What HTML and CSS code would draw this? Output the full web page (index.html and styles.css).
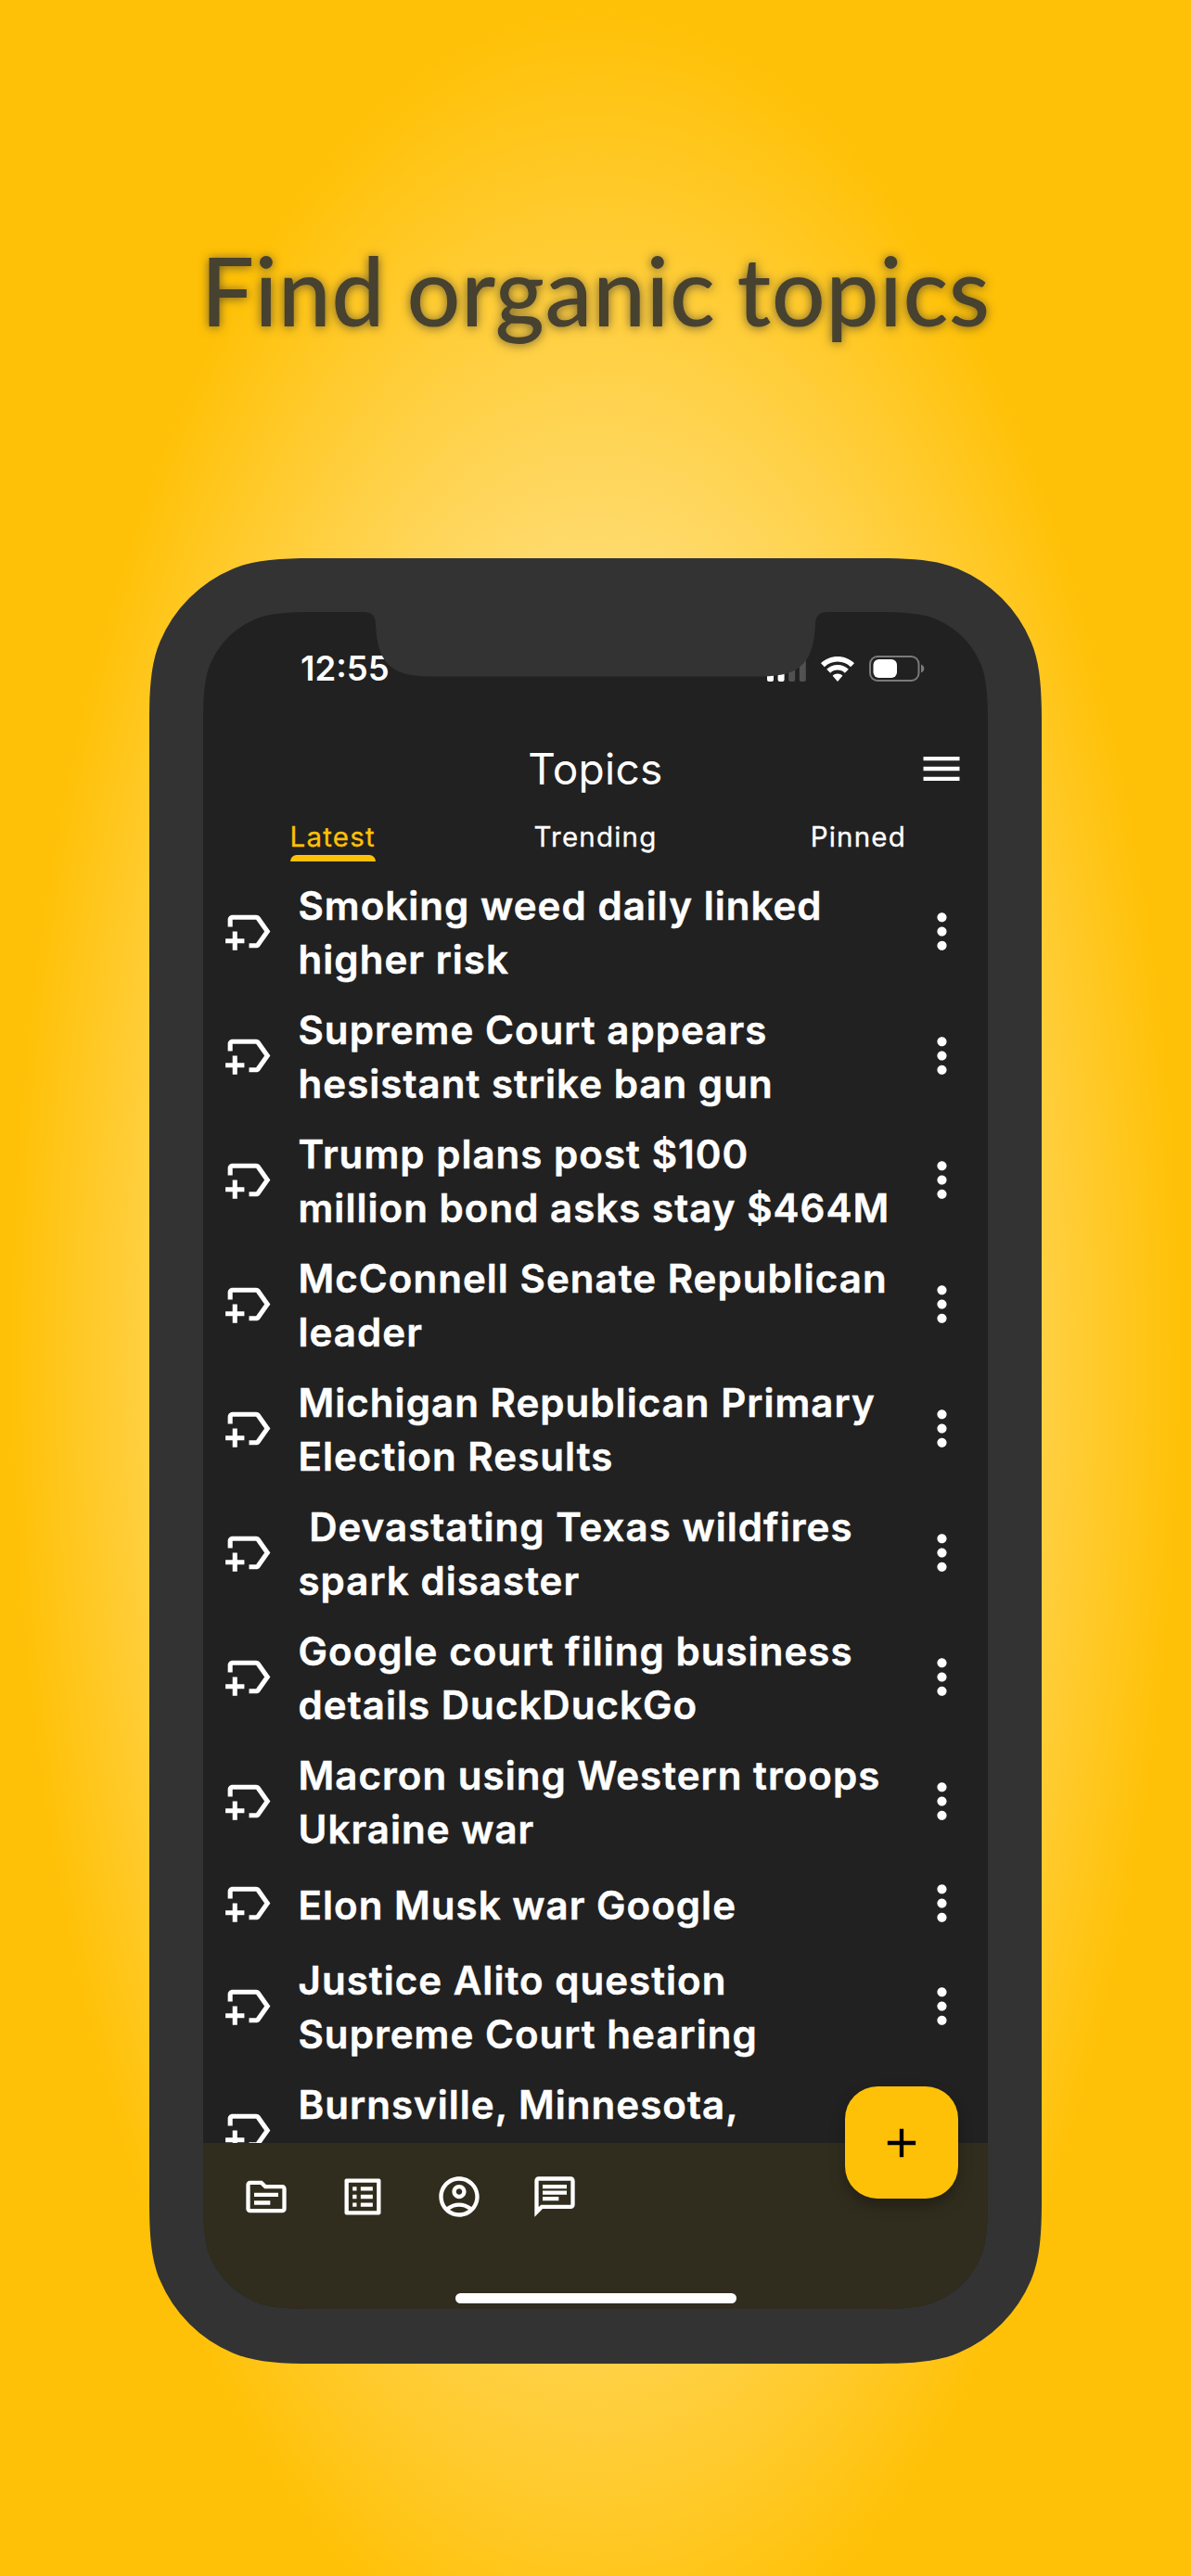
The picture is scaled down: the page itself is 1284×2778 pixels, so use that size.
FILE: index.html
```html
<!DOCTYPE html>
<html lang="en">
  <head>
    <meta charset="utf-8" />
    <meta name="viewport" content="width=device-width, initial-scale=1.0" />
    <title>Topics</title>
    <link rel="stylesheet" href="styles.css">
  </head>
  <body>
    <svg class="sprite" aria-hidden="true">
      <symbol id="icon-label" viewBox="0 0 24 24">
        <path d="M21 12l-4.37 6.16c-.37.52-.98.84-1.63.84h-3v-2h3l3.55-5L15 7H5v3H3V7c0-1.1.9-2 2-2h10c.65 0 1.26.31 1.63.84L21 12zm-11 3H7v-3H5v3H2v2h3v3h2v-3h3v-2z" />
      </symbol>
      <symbol id="icon-more" viewBox="0 0 24 24">
        <path d="M12 8c1.1 0 2-.9 2-2s-.9-2-2-2-2 .9-2 2 .9 2 2 2zm0 2c-1.1 0-2 .9-2 2s.9 2 2 2 2-.9 2-2-.9-2-2-2zm0 6c-1.1 0-2 .9-2 2s.9 2 2 2 2-.9 2-2-.9-2-2-2z" />
      </symbol>
    </svg>

    <h1 class="headline">Find organic topics</h1>

    <div class="phone">
      <div class="screen">
        <div class="status">
          <span class="status__time">12:55</span>
          <div class="status__icons">
            <svg class="status__signal" viewBox="0 0 42 27">
              <rect x="0" y="17" width="7" height="10" rx="2" />
              <rect x="11.6" y="12" width="7" height="15" rx="2" />
              <rect x="23.2" y="6" width="7" height="21" rx="2" opacity="0.22" />
              <rect x="34.8" y="0" width="7" height="27" rx="2" opacity="0.22" />
            </svg>
            <svg class="status__wifi" viewBox="0 0 36 27">
              <path d="M18 0C11 0 4.700 2.700 0 7.200L3.900 11.200C7.600 7.700 12.500 5.500 18 5.500S28.400 7.700 32.100 11.200L36 7.200C31.300 2.700 25 0 18 0Z" />
              <path d="M18 9C13.400 9 9.300 10.800 6.200 13.700L10.200 17.700C12.200 15.700 15 14.500 18 14.500S23.800 15.700 25.800 17.700L29.800 13.700C26.700 10.800 22.600 9 18 9Z" />
              <path d="M18 18.500C15.900 18.500 14 19.300 12.600 20.700L18 27L23.400 20.700C22 19.300 20.100 18.500 18 18.500Z" />
            </svg>
            <svg class="status__battery" viewBox="0 0 60 28">
              <rect x="1" y="1" width="52.500" height="26" rx="8" fill="none" stroke="#7a7a7a" stroke-width="2" />
              <rect x="4.500" y="4" width="25.500" height="20" rx="6" />
              <path d="M56 9.500c2 .6 3.300 2.300 3.300 4.500s-1.300 3.900-3.300 4.500z" fill="#7a7a7a" />
            </svg>
          </div>
        </div>

        <header class="appbar">
          <h2 class="appbar__title">Topics</h2>
          <svg class="icon appbar__menu" viewBox="0 0 24 24"><path d="M3 18h18v-2H3v2zm0-5h18v-2H3v2zm0-7v2h18V6H3z" /></svg>
        </header>

        <nav class="tabs">
          <span class="tabs__item tabs__item--active">Latest</span>
          <span class="tabs__item">Trending</span>
          <span class="tabs__item">Pinned</span>
        </nav>

        <ul class="topics">
          <li class="topic">
            <svg class="topic__icon"><use href="#icon-label" /></svg>
            <p class="topic__text">Smoking weed daily linked<br />higher risk</p>
            <svg class="topic__icon"><use href="#icon-more" /></svg>
          </li>
          <li class="topic">
            <svg class="topic__icon"><use href="#icon-label" /></svg>
            <p class="topic__text">Supreme Court appears<br />hesistant strike ban gun</p>
            <svg class="topic__icon"><use href="#icon-more" /></svg>
          </li>
          <li class="topic">
            <svg class="topic__icon"><use href="#icon-label" /></svg>
            <p class="topic__text">Trump plans post $100<br />million bond asks stay $464M</p>
            <svg class="topic__icon"><use href="#icon-more" /></svg>
          </li>
          <li class="topic">
            <svg class="topic__icon"><use href="#icon-label" /></svg>
            <p class="topic__text">McConnell Senate Republican<br />leader</p>
            <svg class="topic__icon"><use href="#icon-more" /></svg>
          </li>
          <li class="topic">
            <svg class="topic__icon"><use href="#icon-label" /></svg>
            <p class="topic__text">Michigan Republican Primary<br />Election Results</p>
            <svg class="topic__icon"><use href="#icon-more" /></svg>
          </li>
          <li class="topic">
            <svg class="topic__icon"><use href="#icon-label" /></svg>
            <p class="topic__text">&nbsp;Devastating Texas wildfires<br />spark disaster</p>
            <svg class="topic__icon"><use href="#icon-more" /></svg>
          </li>
          <li class="topic">
            <svg class="topic__icon"><use href="#icon-label" /></svg>
            <p class="topic__text">Google court filing business<br />details DuckDuckGo</p>
            <svg class="topic__icon"><use href="#icon-more" /></svg>
          </li>
          <li class="topic">
            <svg class="topic__icon"><use href="#icon-label" /></svg>
            <p class="topic__text">Macron using Western troops<br />Ukraine war</p>
            <svg class="topic__icon"><use href="#icon-more" /></svg>
          </li>
          <li class="topic">
            <svg class="topic__icon"><use href="#icon-label" /></svg>
            <p class="topic__text">Elon Musk war Google</p>
            <svg class="topic__icon"><use href="#icon-more" /></svg>
          </li>
          <li class="topic">
            <svg class="topic__icon"><use href="#icon-label" /></svg>
            <p class="topic__text">Justice Alito question<br />Supreme Court hearing</p>
            <svg class="topic__icon"><use href="#icon-more" /></svg>
          </li>
          <li class="topic">
            <svg class="topic__icon"><use href="#icon-label" /></svg>
            <p class="topic__text">Burnsville, Minnesota,<br />&nbsp;</p>
          </li>
        </ul>

        <footer class="bottombar">
          <svg class="icon" viewBox="0 0 24 24"><path d="M20 6h-8l-2-2H4c-1.100 0-1.990.9-1.990 2L2 18c0 1.100.9 2 2 2h16c1.100 0 2-.9 2-2V8c0-1.100-.9-2-2-2zm0 12H4V6h5.170l2 2H20v10zm-2-6H6v-2h12v2zm-4 4H6v-2h8v2z" /></svg>
          <svg class="icon" viewBox="0 0 24 24"><path d="M19 5v14H5V5h14m1.100-2H3.900c-.5 0-.9.4-.9.9v16.200c0 .4.4.9.9.9h16.200c.4 0 .9-.5.9-.9V3.900c0-.5-.5-.9-.9-.9zM11 7h6v2h-6V7zm0 4h6v2h-6v-2zm0 4h6v2h-6zM7 7h2v2H7zm0 4h2v2H7zm0 4h2v2H7z" /></svg>
          <svg class="icon" viewBox="0 0 24 24"><path d="M12 2C6.480 2 2 6.480 2 12s4.480 10 10 10 10-4.480 10-10S17.520 2 12 2zM7.350 18.500C8.660 17.560 10.260 17 12 17s3.340.56 4.650 1.500c-1.310.94-2.910 1.500-4.650 1.500s-3.340-.56-4.650-1.500zm10.790-1.380C16.450 15.800 14.320 15 12 15s-4.450.8-6.140 2.120C4.700 15.730 4 13.950 4 12c0-4.420 3.580-8 8-8s8 3.580 8 8c0 1.950-.7 3.730-1.860 5.120zM12 6c-1.930 0-3.500 1.570-3.500 3.500S10.070 13 12 13s3.500-1.570 3.500-3.500S13.930 6 12 6zm0 5c-.83 0-1.500-.67-1.500-1.500S11.170 8 12 8s1.500.67 1.500 1.500S12.830 11 12 11z" /></svg>
          <svg class="icon" viewBox="0 0 24 24"><path d="M4 4h16v12H5.170L4 17.170V4m0-2c-1.100 0-1.990.9-1.990 2L2 22l4-4h14c1.100 0 2-.9 2-2V4c0-1.100-.9-2-2-2H4zm2 10h8v2H6v-2zm0-3h12v2H6V9zm0-3h12v2H6V6z" /></svg>
        </footer>

        <div class="notch"></div>
        <button class="fab" type="button" aria-label="Add topic">
          <svg class="icon" viewBox="0 0 24 24"><path d="M19 13h-6v6h-2v-6H5v-2h6V5h2v6h6v2z" /></svg>
        </button>
        <div class="home-indicator"></div>
      </div>
    </div>
  </body>
</html>
```
FILE: styles.css
```css
body {
  --color-primary: #ffc107;
  --color-frame: #333333;
  --color-screen: #212121;
  --color-bar: #312d1e;

  margin: 0;
  height: 2778px;
  overflow: hidden;
  display: flex;
  flex-direction: column;
  align-items: center;
  background: radial-gradient(ellipse 632px 1450px at 642px 1460px, #ffffff 0%, var(--color-primary) 100%);
  font-family: "Inter", sans-serif;
}

.sprite {
  position: absolute;
  width: 0;
  height: 0;
}

.headline {
  margin: 251px 0 0;
  height: 351px;
  font: 500 102px/124px "Lato", sans-serif;
  letter-spacing: 0.5px;
  word-spacing: -3px;
  white-space: nowrap;
  color: #474130;
  text-shadow: 0 1px 11px rgba(71, 65, 48, 0.8);
}

.phone {
  flex: none;
  box-sizing: border-box;
  width: 962px;
  height: 1947px;
  padding: 58px;
  background: var(--color-frame);
  clip-path: path("M0 176C0 140 1.8 113 11.5 90A147 147 0 0 1 90 11.5C113 1.8 140 0 176 0H786C822 0 849 1.8 872 11.5A147 147 0 0 1 950.5 90C960.2 113 962 140 962 176V1771C962 1807 960.2 1834 950.5 1857A147 147 0 0 1 872 1935.5C849 1945.2 822 1947 786 1947H176C140 1947 113 1945.2 90 1935.5A147 147 0 0 1 11.5 1857C1.8 1834 0 1807 0 1771Z");
}

.screen {
  position: relative;
  display: flex;
  flex-direction: column;
  width: 846px;
  height: 1830px;
  background: var(--color-screen);
  color: #ffffff;
  clip-path: path("M0 122C0 92 1.4 70.5 7.7 56A93 93 0 0 1 56 7.7C70.5 1.4 92 0 122 0H724C754 0 775.5 1.4 790 7.7A93 93 0 0 1 838.3 56C844.6 70.5 846 92 846 122V1708C846 1738 844.6 1759.5 838.3 1774A93 93 0 0 1 790 1822.3C775.5 1828.6 754 1830 724 1830H122C92 1830 70.5 1828.6 56 1822.3A93 93 0 0 1 7.7 1774C1.4 1759.5 0 1738 0 1708Z");
}

.icon {
  width: 52px;
  height: 52px;
  fill: currentColor;
}

.status {
  display: flex;
  justify-content: space-between;
  align-items: center;
  height: 122px;
  padding: 0 68px 0 105px;
}

.status__time {
  font-size: 36.500px;
  font-weight: 600;
}

.status__icons {
  display: flex;
  align-items: center;
  gap: 16px;
}

.status__icons svg {
  fill: #ffffff;
}

.status__signal {
  width: 42px;
  height: 27px;
}

.status__wifi {
  width: 36px;
  height: 27px;
}

.status__battery {
  width: 60px;
  height: 28px;
}

.appbar {
  display: grid;
  grid-template-columns: 1fr auto 1fr;
  align-items: center;
  height: 94px;
  padding: 0 24px;
}

.appbar__title {
  grid-column: 2;
  margin: 0 0 1px;
  font-size: 46px;
  font-weight: 400;
  letter-spacing: 0.3px;
}

.appbar__menu {
  justify-self: end;
}

.tabs {
  display: grid;
  grid-template-columns: repeat(3, 1fr);
  justify-items: center;
  height: 61px;
  margin: 0 -2px;
}

.tabs__item {
  box-sizing: border-box;
  height: 53px;
  padding-top: 8px;
  font-size: 29.500px;
  font-weight: 400;
  line-height: 37px;
  letter-spacing: 1.200px;
  -webkit-text-stroke: 0.3px currentColor;
}

.tabs__item--active {
  display: flex;
  flex-direction: column;
  color: var(--color-primary);
}

.tabs__item--active::after {
  content: "";
  height: 7px;
  margin-top: 1px;
  border-radius: 7px 7px 0 0;
  background: var(--color-primary);
}

.topics {
  flex: 1;
  min-height: 0;
  overflow: hidden;
  margin: 0;
  padding: 0;
  list-style: none;
}

.topic {
  box-sizing: border-box;
  display: flex;
  align-items: center;
  min-height: 86.700px;
  padding: 8.700px 19.500px 8.700px 19px;
}

.topic__icon {
  flex: none;
  width: 61px;
  height: 61px;
  fill: currentColor;
}

.topic__text {
  flex: 1;
  margin: 2px 0 -2px 22.500px;
  font-size: 42px;
  font-weight: 600;
  line-height: 58.350px;
  letter-spacing: 1.050px;
  white-space: nowrap;
  -webkit-text-stroke: 0.5px currentColor;
}

.bottombar {
  box-sizing: border-box;
  display: flex;
  gap: 51.800px;
  height: 179px;
  padding: 32px 42px;
  background: var(--color-bar);
}

.notch {
  position: absolute;
  top: 0;
  left: 172px;
  width: 502px;
  height: 70px;
  background: var(--color-frame);
  clip-path: path("M0 0C10 0 14 4 14 14C16 50 26 69.500 72 69.500H430C476 69.500 486 50 488 14C488 4 492 0 502 0Z");
}

.fab {
  position: absolute;
  top: 1590px;
  left: 692px;
  display: flex;
  align-items: center;
  justify-content: center;
  width: 122px;
  height: 121px;
  padding: 0;
  border: none;
  border-radius: 35px;
  background: var(--color-primary);
  color: #000000;
  box-shadow: 0 8px 16px rgba(0, 0, 0, 0.3);
}

.home-indicator {
  position: absolute;
  top: 1813px;
  left: 272px;
  width: 303px;
  height: 11px;
  border-radius: 6px;
  background: #ffffff;
}
```
